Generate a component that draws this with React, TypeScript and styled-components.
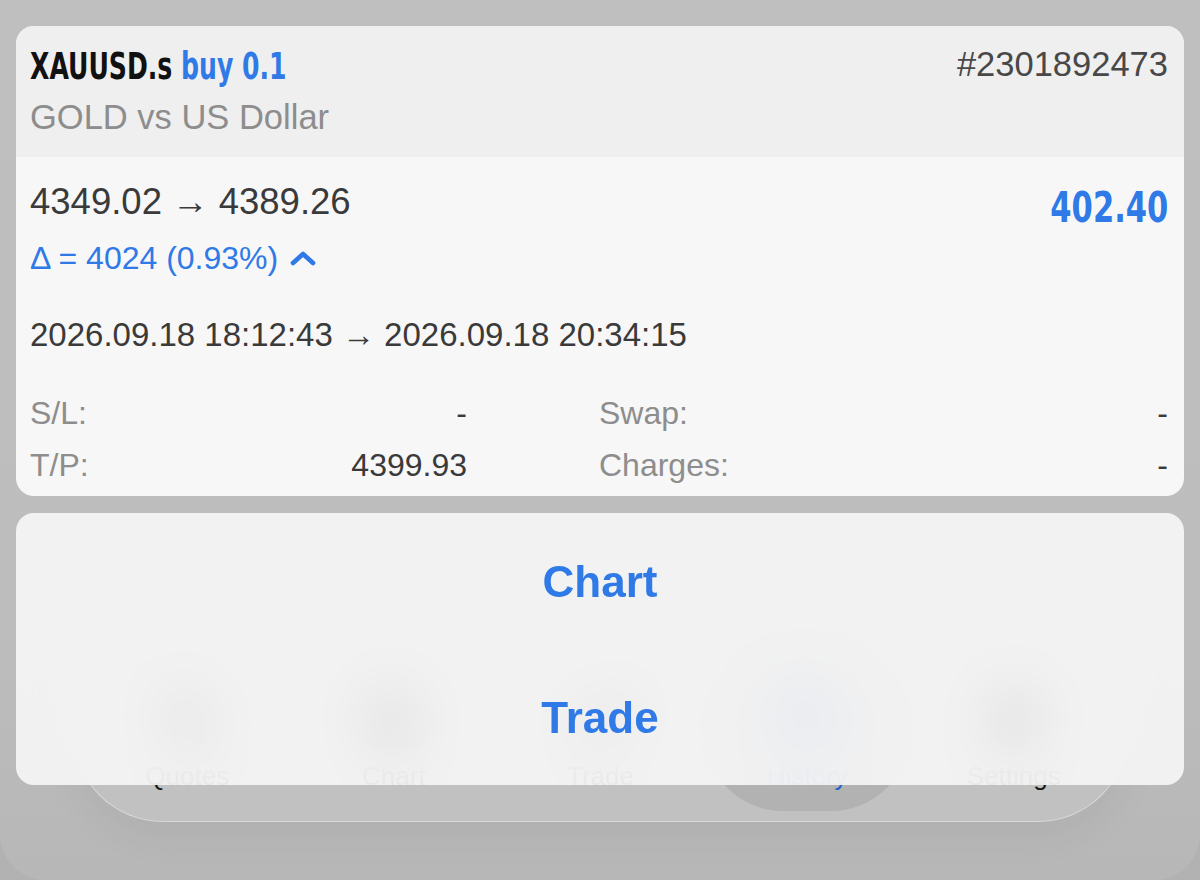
import React from "react";
import styled, { createGlobalStyle } from "styled-components";
import { ArrowUpDown, CandlestickChart, TrendingUp, History, Settings } from "lucide-react";

const sans = `"Liberation Sans", Arial, Helvetica, sans-serif`;
const condensed = `"DejaVu Sans Condensed", "DejaVu Sans", sans-serif`;
const blue = "#2f7ae6";

const GlobalStyle = createGlobalStyle`
  html, body {
    margin: 0;
    padding: 0;
    background: #b2b2b2;
  }
  body {
    font-family: ${sans};
  }
`;

const Screen = styled.div`
  position: relative;
  width: 1200px;
  height: 880px;
  overflow: hidden;
  box-sizing: border-box;
  padding: 26px 16px 0;
  display: flex;
  flex-direction: column;
  background: linear-gradient(#bfbfbf, #bdbdbd 70%, #b7b7b7);
  border-radius: 0 0 46px 46px;
`;

const Card = styled.div`
  display: flex;
  flex-direction: column;
  border-radius: 18px;
  overflow: hidden;
  background: #f7f7f7;
`;

const CardHeader = styled.div`
  background: #efefef;
  padding: 19px 16px 20px 14px;
`;

const TopRow = styled.div`
  display: flex;
  justify-content: space-between;
  align-items: flex-start;
`;

// the app uses a condensed face here; squeeze a regular one to match
const Symbol = styled.div`
  font-family: ${condensed};
  font-stretch: condensed;
  font-weight: 700;
  font-size: 37px;
  line-height: 44px;
  color: #111;
  transform: scaleX(0.755);
  transform-origin: left center;
  white-space: nowrap;
`;

const Side = styled.span`
  color: ${blue};
`;

const Ticket = styled.div`
  margin-top: 1px;
  font-size: 34.5px;
  line-height: 36px;
  color: #484848;
`;

const Description = styled.div`
  margin-top: 8px;
  font-size: 34.5px;
  line-height: 40px;
  color: #8d8d8d;
`;

const CardBody = styled.div`
  padding: 23px 16px 5px 14px;
  display: flex;
  flex-direction: column;
`;

const PriceRow = styled.div`
  display: flex;
  justify-content: space-between;
  align-items: flex-start;
`;

const PriceCol = styled.div`
  display: flex;
  flex-direction: column;
`;

const Prices = styled.div`
  font-size: 36.5px;
  line-height: 44px;
  color: #3a3a3a;
`;

const Delta = styled.div`
  margin-top: 14px;
  display: flex;
  align-items: center;
  gap: 12px;
  font-size: 32px;
  line-height: 40px;
  color: ${blue};
`;

const Profit = styled.div`
  margin-top: 5px;
  font-family: ${condensed};
  font-stretch: condensed;
  font-weight: 700;
  font-size: 43px;
  line-height: 44px;
  color: ${blue};
  transform: scaleX(0.79);
  transform-origin: right center;
`;

const Times = styled.div`
  margin-top: 37px;
  font-size: 33px;
  line-height: 40px;
  color: #3a3a3a;
`;

const InfoGrid = styled.div`
  margin-top: 32px;
  display: grid;
  grid-template-columns: 1fr 1fr;
`;

const InfoCell = styled.div<{ $first?: boolean }>`
  display: flex;
  justify-content: space-between;
  font-size: 32px;
  line-height: 52px;
  padding-right: ${(p) => (p.$first ? "132px" : "0")};
`;

const InfoLabel = styled.span`
  color: #8d8d8d;
`;

const InfoValue = styled.span`
  color: #3a3a3a;
`;

const Sheet = styled.div`
  position: relative;
  z-index: 2;
  margin-top: 17px;
  border-radius: 18px;
  overflow: hidden;
  background: rgba(247, 247, 247, 0.9);
  backdrop-filter: blur(26px);
  -webkit-backdrop-filter: blur(26px);
  display: flex;
  flex-direction: column;
`;

const SheetAction = styled.div`
  height: 136px;
  padding-top: 2px;
  box-sizing: border-box;
  display: flex;
  align-items: center;
  justify-content: center;
  font-size: 44px;
  font-weight: 700;
  color: ${blue};
`;

const TabBar = styled.div`
  position: absolute;
  z-index: 1;
  left: 73px;
  width: 1055px;
  bottom: 58px;
  height: 180px;
  box-sizing: border-box;
  padding: 10px;
  border-radius: 90px;
  background: #c1c1c1;
  border: 1.5px solid rgba(235, 235, 235, 0.55);
  box-shadow: 0 14px 40px rgba(0, 0, 0, 0.05);
  display: grid;
  grid-template-columns: repeat(5, 1fr);
`;

const Tab = styled.div<{ $active?: boolean }>`
  display: flex;
  flex-direction: column;
  align-items: center;
  justify-content: flex-end;
  gap: 10px;
  padding-bottom: 18px;
  border-radius: 80px;
  background: ${(p) => (p.$active ? "#b2b2b2" : "transparent")};
  color: ${(p) => (p.$active ? "#2a62c4" : "#1a1a1a")};
`;

const TabLabel = styled.div`
  font-size: 26px;
  line-height: 34px;
`;

const Chevron = () => (
  <svg width="26" height="16" viewBox="0 0 26 16">
    <polyline
      points="3,13 13,4 23,13"
      fill="none"
      stroke={blue}
      strokeWidth="4.6"
      strokeLinecap="round"
      strokeLinejoin="round"
    />
  </svg>
);

const tabs = [
  { label: "Quotes", Icon: ArrowUpDown },
  { label: "Chart", Icon: CandlestickChart },
  { label: "Trade", Icon: TrendingUp },
  { label: "History", Icon: History, active: true },
  { label: "Settings", Icon: Settings },
];

const App = () => {
  return (
    <>
      <GlobalStyle />
      <Screen>
        <TabBar>
          {tabs.map((t) => (
            <Tab key={t.label} $active={t.active}>
              <t.Icon size={64} strokeWidth={4.5} />
              <TabLabel>{t.label}</TabLabel>
            </Tab>
          ))}
        </TabBar>

        <Card>
          <CardHeader>
            <TopRow>
              <Symbol>
                XAUUSD.s <Side>buy 0.1</Side>
              </Symbol>
              <Ticket>#2301892473</Ticket>
            </TopRow>
            <Description>GOLD vs US Dollar</Description>
          </CardHeader>
          <CardBody>
            <PriceRow>
              <PriceCol>
                <Prices>4349.02 → 4389.26</Prices>
                <Delta>
                  <span>Δ = 4024 (0.93%)</span>
                  <Chevron />
                </Delta>
              </PriceCol>
              <Profit>402.40</Profit>
            </PriceRow>
            <Times>2026.09.18 18:12:43 → 2026.09.18 20:34:15</Times>
            <InfoGrid>
              <InfoCell $first>
                <InfoLabel>S/L:</InfoLabel>
                <InfoValue>-</InfoValue>
              </InfoCell>
              <InfoCell>
                <InfoLabel>Swap:</InfoLabel>
                <InfoValue>-</InfoValue>
              </InfoCell>
              <InfoCell $first>
                <InfoLabel>T/P:</InfoLabel>
                <InfoValue>4399.93</InfoValue>
              </InfoCell>
              <InfoCell>
                <InfoLabel>Charges:</InfoLabel>
                <InfoValue>-</InfoValue>
              </InfoCell>
            </InfoGrid>
          </CardBody>
        </Card>

        <Sheet>
          <SheetAction>Chart</SheetAction>
          <SheetAction>Trade</SheetAction>
        </Sheet>
      </Screen>
    </>
  );
};

export default App;
